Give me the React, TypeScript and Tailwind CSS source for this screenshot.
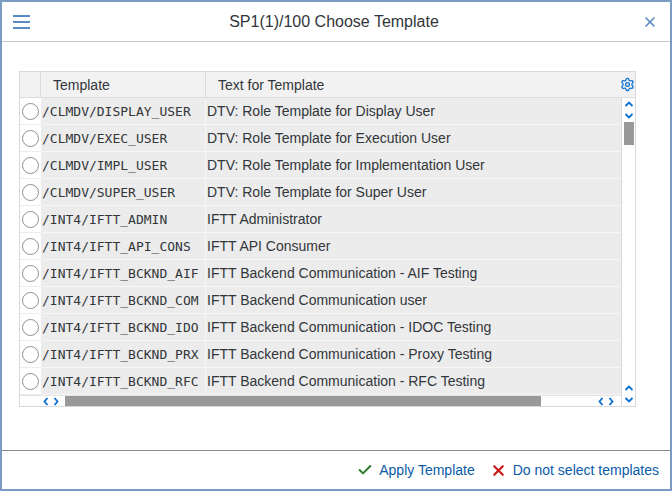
import { Settings, Check, X } from 'lucide-react';

const rows = [
  ['/CLMDV/DISPLAY_USER', 'DTV: Role Template for Display User'],
  ['/CLMDV/EXEC_USER', 'DTV: Role Template for Execution User'],
  ['/CLMDV/IMPL_USER', 'DTV: Role Template for Implementation User'],
  ['/CLMDV/SUPER_USER', 'DTV: Role Template for Super User'],
  ['/INT4/IFTT_ADMIN', 'IFTT Administrator'],
  ['/INT4/IFTT_API_CONS', 'IFTT API Consumer'],
  ['/INT4/IFTT_BCKND_AIF', 'IFTT Backend Communication - AIF Testing'],
  ['/INT4/IFTT_BCKND_COM', 'IFTT Backend Communication user'],
  ['/INT4/IFTT_BCKND_IDO', 'IFTT Backend Communication - IDOC Testing'],
  ['/INT4/IFTT_BCKND_PRX', 'IFTT Backend Communication - Proxy Testing'],
  ['/INT4/IFTT_BCKND_RFC', 'IFTT Backend Communication - RFC Testing'],
];

const sans = "font-['Liberation_Sans',Arial,sans-serif]";

// small scroll chevrons, drawn by hand so they match the SAP ones
function Chev({ dir }: { dir: 'up' | 'down' | 'left' | 'right' }) {
  const pts = {
    up: '1.5,5 5,1.5 8.5,5',
    down: '1.5,1 5,4.5 8.5,1',
    left: '4.5,1 1.5,4.5 4.5,8',
    right: '1.5,1 4.5,4.5 1.5,8',
  }[dir];
  const vertical = dir === 'up' || dir === 'down';
  return (
    <svg width={vertical ? 10 : 6} height={vertical ? 6 : 9} className="text-[#0a6ed1]">
      <polyline points={pts} fill="none" stroke="currentColor" strokeWidth={1.8} />
    </svg>
  );
}

function Arrows() {
  return (
    <div className="flex items-center gap-[4px]">
      <Chev dir="left" />
      <Chev dir="right" />
    </div>
  );
}

export default function App() {
  return (
    <div className={`w-[672px] h-[491px] flex flex-col border-2 border-[#7a9cc2] bg-white text-[#32363a] ${sans}`}>
      <header className="h-[40px] flex items-center justify-between px-[11px] border-b border-[#c9c9c9] shrink-0">
        <div className="flex flex-col gap-[4px] w-[17px]">
          <span className="h-[2px] bg-[#5b8ac2]" />
          <span className="h-[2px] bg-[#5b8ac2]" />
          <span className="h-[2px] bg-[#5b8ac2]" />
        </div>
        <p className="text-[16px] -ml-[4px]">SP1(1)/100 Choose Template</p>
        <X size={16} strokeWidth={2.5} className="text-[#5b8ac2] mr-[1px]" />
      </header>

      <main className="flex-1 pt-[29px] pl-[17px]">
        <div className="w-[617px] border border-[#d9d9d9]">
          <div className="flex h-[26px] bg-[#f2f2f2] border-b border-[#dcdcdc] text-[14px]">
            <div className="w-[21px] border-r border-[#dcdcdc]" />
            <div className="w-[165px] border-r border-[#dcdcdc] pl-[12px] flex items-center pt-[1px]">Template</div>
            <div className="flex-1 pl-[12px] flex items-center pt-[1px]">Text for Template</div>
            <div className="w-[15px] flex items-center justify-center">
              <Settings size={15} strokeWidth={2} className="text-[#0a6ed1]" />
            </div>
          </div>

          <div className="flex">
            <div className="flex-1">
              {rows.map(([tpl, text]) => (
                <div key={tpl} className="flex h-[27px]">
                  <div className="w-[21px] bg-white flex items-center justify-center border-b border-[#ececec]">
                    <span className="w-[17px] h-[17px] rounded-full border border-[#8f8f8f] bg-white" />
                  </div>
                  <div className="w-[165px] bg-[#ececec] border-r border-b border-[#f7f7f7] pl-[1px] pt-[1px] flex items-center font-['DejaVu_Sans_Mono',monospace] text-[13px] whitespace-nowrap overflow-hidden">
                    {tpl}
                  </div>
                  <div className="flex-1 bg-[#ececec] border-b border-[#f7f7f7] pl-[1px] pt-[1px] flex items-center text-[14px] whitespace-nowrap">
                    {text}
                  </div>
                </div>
              ))}
              <div className="flex h-[11px] items-center border-t border-[#e2e2e2]">
                <div className="w-[23px]" />
                <Arrows />
                <div className="w-[6px]" />
                <div className="w-[476px] h-full bg-[#999999]" />
                <div className="flex-1" />
                <Arrows />
                <div className="w-[7px]" />
              </div>
            </div>
            <div className="w-[14px] border-l border-[#d9d9d9] flex flex-col items-center">
              <div className="mt-[3px]"><Chev dir="up" /></div>
              <div className="mt-[6px]"><Chev dir="down" /></div>
              <div className="w-[10px] h-[23px] bg-[#999999] mt-[3px]" />
              <div className="flex-1" />
              <Chev dir="up" />
              <div className="mt-[6px] mb-[3px]"><Chev dir="down" /></div>
            </div>
          </div>
        </div>
      </main>

      <footer className="h-[39px] border-t border-[#8c8c8c] flex items-center justify-end pr-[11px] gap-[15px] text-[14px] text-[#0a5ba8] shrink-0">
        <div className="flex items-center gap-[6px]">
          <Check size={16} strokeWidth={3} className="text-[#2b7c2b]" />
          <span>Apply Template</span>
        </div>
        <div className="flex items-center gap-[6px]">
          <X size={17} strokeWidth={3} className="text-[#cc1919]" />
          <span>Do not select templates</span>
        </div>
      </footer>
    </div>
  );
}
